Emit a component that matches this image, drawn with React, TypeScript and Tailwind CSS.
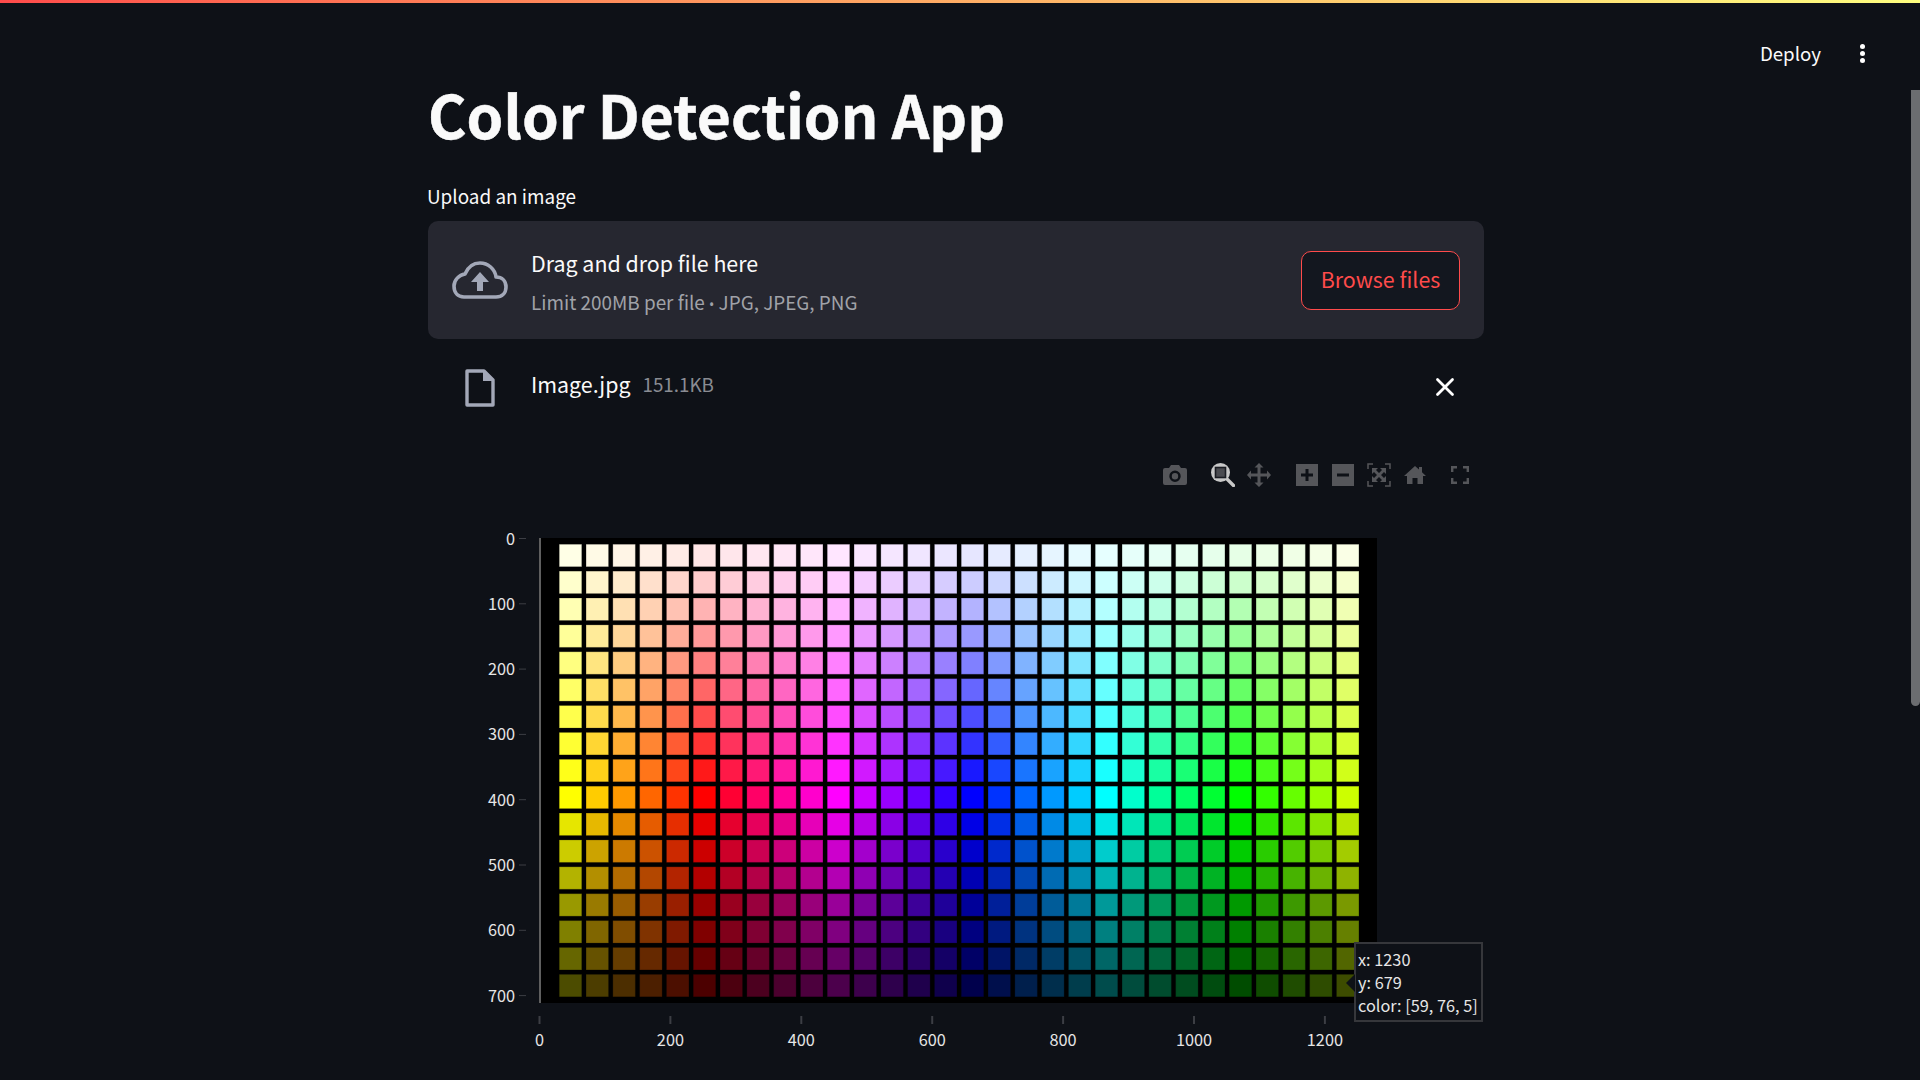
import React from 'react';
import { X } from 'lucide-react';

const fontStack = "font-['Noto_Sans_CJK_SC','Source_Sans_Pro',sans-serif]";

const rows = Array.from({ length: 17 }, (_, i) => i);
const cols = Array.from({ length: 30 }, (_, i) => i);

// swatch colour: hue walks backwards by column, rows go tint -> full -> shade
function swatch(col: number, row: number): string {
  const h = (60 - col * 12 + 360) % 360;
  const s = row <= 9 ? 0.1 + row * 0.1 : 1;
  const v = row <= 9 ? 1 : 1 - (row - 9) * 0.1;
  const f = (n: number) => {
    const k = (n + h / 60) % 6;
    return Math.round(255 * (v - v * s * Math.max(0, Math.min(k, 4 - k, 1))));
  };
  return `rgb(${f(5)},${f(3)},${f(1)})`;
}

const xTicks = [0, 200, 400, 600, 800, 1000, 1200];
const yTicks = [0, 100, 200, 300, 400, 500, 600, 700];

const Chart: React.FC = () => (
  <div className="relative mt-[23px] h-[570px]">
    {/* viewBox origin sits at page x=428, y=530 */}
    <svg width={1056} height={570} viewBox="0 -20 1056 570" className="block">
      <rect x={112} y={8} width={837} height={465} fill="#000" />
      {rows.map((r) =>
        cols.map((c) => (
          <rect
            key={`${r}-${c}`}
            x={131.25 + c * 26.8}
            y={14.25 + r * 26.88}
            width={22.5}
            height={22.5}
            fill={swatch(c, r)}
            stroke="rgba(0,0,0,0.2)"
            strokeWidth={1}
          />
        ))
      )}
      <line x1={112} y1={8} x2={112} y2={473} stroke="#5f5f5f" strokeWidth={2} />
      {yTicks.map((t) => {
        const y = 8.5 + t * 0.653;
        return (
          <g key={t}>
            <line x1={91} y1={y} x2={98} y2={y} stroke="#3c3e44" strokeWidth={1} />
            <text x={87} y={y + 6} textAnchor="end" fontSize={16.3} fill="#e6e6e6">{t}</text>
          </g>
        );
      })}
      {xTicks.map((t) => {
        const x = 111.5 + t * 0.6545;
        return (
          <g key={t}>
            <line x1={x} y1={486} x2={x} y2={494} stroke="#3c3e44" strokeWidth={2} />
            <text x={x} y={516} textAnchor="middle" fontSize={16.3} fill="#e6e6e6">{t}</text>
          </g>
        );
      })}
    </svg>
    <div className="absolute left-[926px] top-[432px] w-[129px] h-[80px] bg-[#0e1117] border-2 border-[#36373b] pl-[2px] text-[16.3px] leading-[23px] text-[#e6e6e6] whitespace-nowrap flex flex-col justify-center">
      <span>x: 1230</span>
      <span>y: 679</span>
      <span>color: [59, 76, 5]</span>
      <svg width={9} height={18} className="absolute left-[-10px] top-[30px]">
        <path d="M9 0 L0 9 L9 18 Z" fill="#0e1117" />
      </svg>
    </div>
  </div>
);

const dim = '#55565a';

const Toolbar: React.FC = () => (
  <div className="flex items-center h-[24px] mt-[58px] pl-[735px]">
    <svg width={24} height={20} viewBox="0 0 24 20" className="shrink-0">
      <path fill={dim} fillRule="evenodd" d="M8 0h8l2 3h4a2 2 0 0 1 2 2v13a2 2 0 0 1-2 2H2a2 2 0 0 1-2-2V5a2 2 0 0 1 2-2h4zM12 5.5a5.7 5.7 0 1 0 0 11.4a5.7 5.7 0 0 0 0-11.4zM12 8a3.2 3.2 0 1 1 0 6.4a3.2 3.2 0 0 1 0-6.4z" />
    </svg>
    <svg width={24} height={24} viewBox="0 0 24 24" className="ml-[24px] shrink-0">
      <path fill="none" stroke="#c8c8c8" strokeWidth={3.4} strokeLinecap="round" d="M15.5 15.5L22.5 22.5" />
      <circle cx={9.5} cy={9.5} r={9.5} fill="#c8c8c8" />
      <rect x={4.5} y={4.5} width={10} height={10} fill="#4a4b50" stroke="#1a1c22" strokeWidth={1.6} />
    </svg>
    <svg width={24} height={24} viewBox="0 0 24 24" className="ml-[12px] shrink-0">
      <path fill={dim} d="M12 0l4.5 4.5h-3V10.500h6.500v-3l4 4.500-4 4.500v-3h-6.500v6h3L12 24l-4.500-4.500h3v-6h-6.500v3L0 12l4-4.500v3h6.500V4.500h-3z" />
    </svg>
    <svg width={22} height={22} viewBox="0 0 22 22" className="ml-[25px] shrink-0">
      <rect width={22} height={22} fill={dim} />
      <path fill="#0e1117" d="M9.5 5h3v4.5H17v3h-4.5V17h-3v-4.5H5v-3h4.5z" />
    </svg>
    <svg width={22} height={22} viewBox="0 0 22 22" className="ml-[14px] shrink-0">
      <rect width={22} height={22} fill={dim} />
      <rect x={5} y={9.5} width={12} height={3} fill="#0e1117" />
    </svg>
    <svg width={24} height={24} viewBox="0 0 24 24" className="ml-[13px] shrink-0">
      <path fill="none" stroke={dim} strokeWidth={1.5} d="M1 6V1h5M18 1h5v5M23 18v5h-5M6 23H1v-5" />
      <path fill={dim} d="M5 5h6L9 7l3 3 3-3-2-2h6v6l-2-2-3 3 3 3 2-2v6h-6l2-2-3-3-3 3 2 2H5v-6l2 2 3-3-3-3-2 2z" />
    </svg>
    <svg width={22} height={18} viewBox="0 0 22 18" className="ml-[13px] shrink-0">
      <path fill={dim} d="M11 0l4 3.500V1h3v5.200L22 10h-3v8h-5.500v-6h-5v6H3v-8H0z" />
    </svg>
    <svg width={18} height={18} viewBox="0 0 18 18" className="ml-[25px] shrink-0">
      <path fill="none" stroke={dim} strokeWidth={2.4} d="M1.200 6V1.200H6M12 1.200h4.800V6M16.800 12v4.800H12M6 16.800H1.200V12" />
    </svg>
  </div>
);

const App: React.FC = () => {
  return (
    <div className={`relative h-[1080px] overflow-hidden bg-[#0e1117] text-[#fafafa] ${fontStack}`}>
      <div className="h-[3px] bg-gradient-to-r from-[#ff4b4b] to-[#ffff80]" />

      <header className="absolute top-[37px] right-0 flex items-center gap-[39px] h-[32px] pr-[55px]">
        <span className="text-[18.7px]">Deploy</span>
        <div className="flex flex-col gap-[2px] mt-[1px]">
          <span className="w-[5px] h-[5px] rounded-full bg-white" />
          <span className="w-[5px] h-[5px] rounded-full bg-white" />
          <span className="w-[5px] h-[5px] rounded-full bg-white" />
        </div>
      </header>
      <div className="absolute right-0 top-[90px] w-[9px] h-[616px] bg-[#6b6d70] rounded-b-full" />

      <main className="w-[1056px] ml-[428px]">
        <h1 className="text-[58.800px] leading-[66px] font-bold mt-[78px] [-webkit-text-stroke:0.5px_#fafafa]">Color Detection App</h1>
        <label className="block text-[18.900px] leading-[24px] mt-[37px] -ml-px">Upload an image</label>

        <section className="flex items-center h-[118px] mt-[13px] rounded-[10px] bg-[#262730] pl-[24px] pr-[24px]">
          <svg width={56} height={38} viewBox="0 0 56 38" className="shrink-0">
            <path fill="none" stroke="#a3a8b8" strokeWidth={3.6} strokeLinejoin="round" d="M12 36h32c6 0 10-4 10-10c0-6-4-10-10-10c-1-8-8-14-16-14c-7 0-12 4-15 11C7 14 2 19 2 25c0 7 4 11 10 11z" />
            <path fill="#a3a8b8" d="M28 11l9 10h-6v9h-6v-9h-6z" />
          </svg>
          <div className="ml-[23px] flex-1 pt-[5px]">
            <div className="text-[21.400px] leading-[28px]">Drag and drop file here</div>
            <div className="text-[18.900px] leading-[24px] mt-[13px] text-[#a0a2a8]">
              Limit 200MB per file <span className="font-['Noto_Sans',sans-serif] text-[14px]">•</span> JPG, JPEG, PNG
            </div>
          </div>
          <button className="w-[159px] h-[59px] pb-[2px] rounded-[10px] border border-[#ff4b4b] bg-[#13171f] text-[#ff4b4b] text-[21.400px]">Browse files</button>
        </section>

        <section className="flex items-center h-[38px] mt-[28px] pl-[37px]">
          <svg width={30} height={38} viewBox="0 0 30 38" className="shrink-0 mt-[3px]">
            <path fill="none" stroke="#a3a8b8" strokeWidth={3.4} strokeLinejoin="round" d="M2 2h17l9 9v25H2z" />
            <path fill="#a3a8b8" d="M18 2l10 10H18z" />
          </svg>
          <span className="ml-[36px] text-[21.400px] -mt-[3px]">Image.jpg</span>
          <span className="ml-[12px] text-[18.800px] text-[#8a8c93] -mt-[3px]">151.1KB</span>
          <X size={30} strokeWidth={2.2} className="ml-auto mr-[24px] mt-[2px] text-white" />
        </section>

        <Toolbar />
        <Chart />
      </main>
    </div>
  );
};

export default App;
